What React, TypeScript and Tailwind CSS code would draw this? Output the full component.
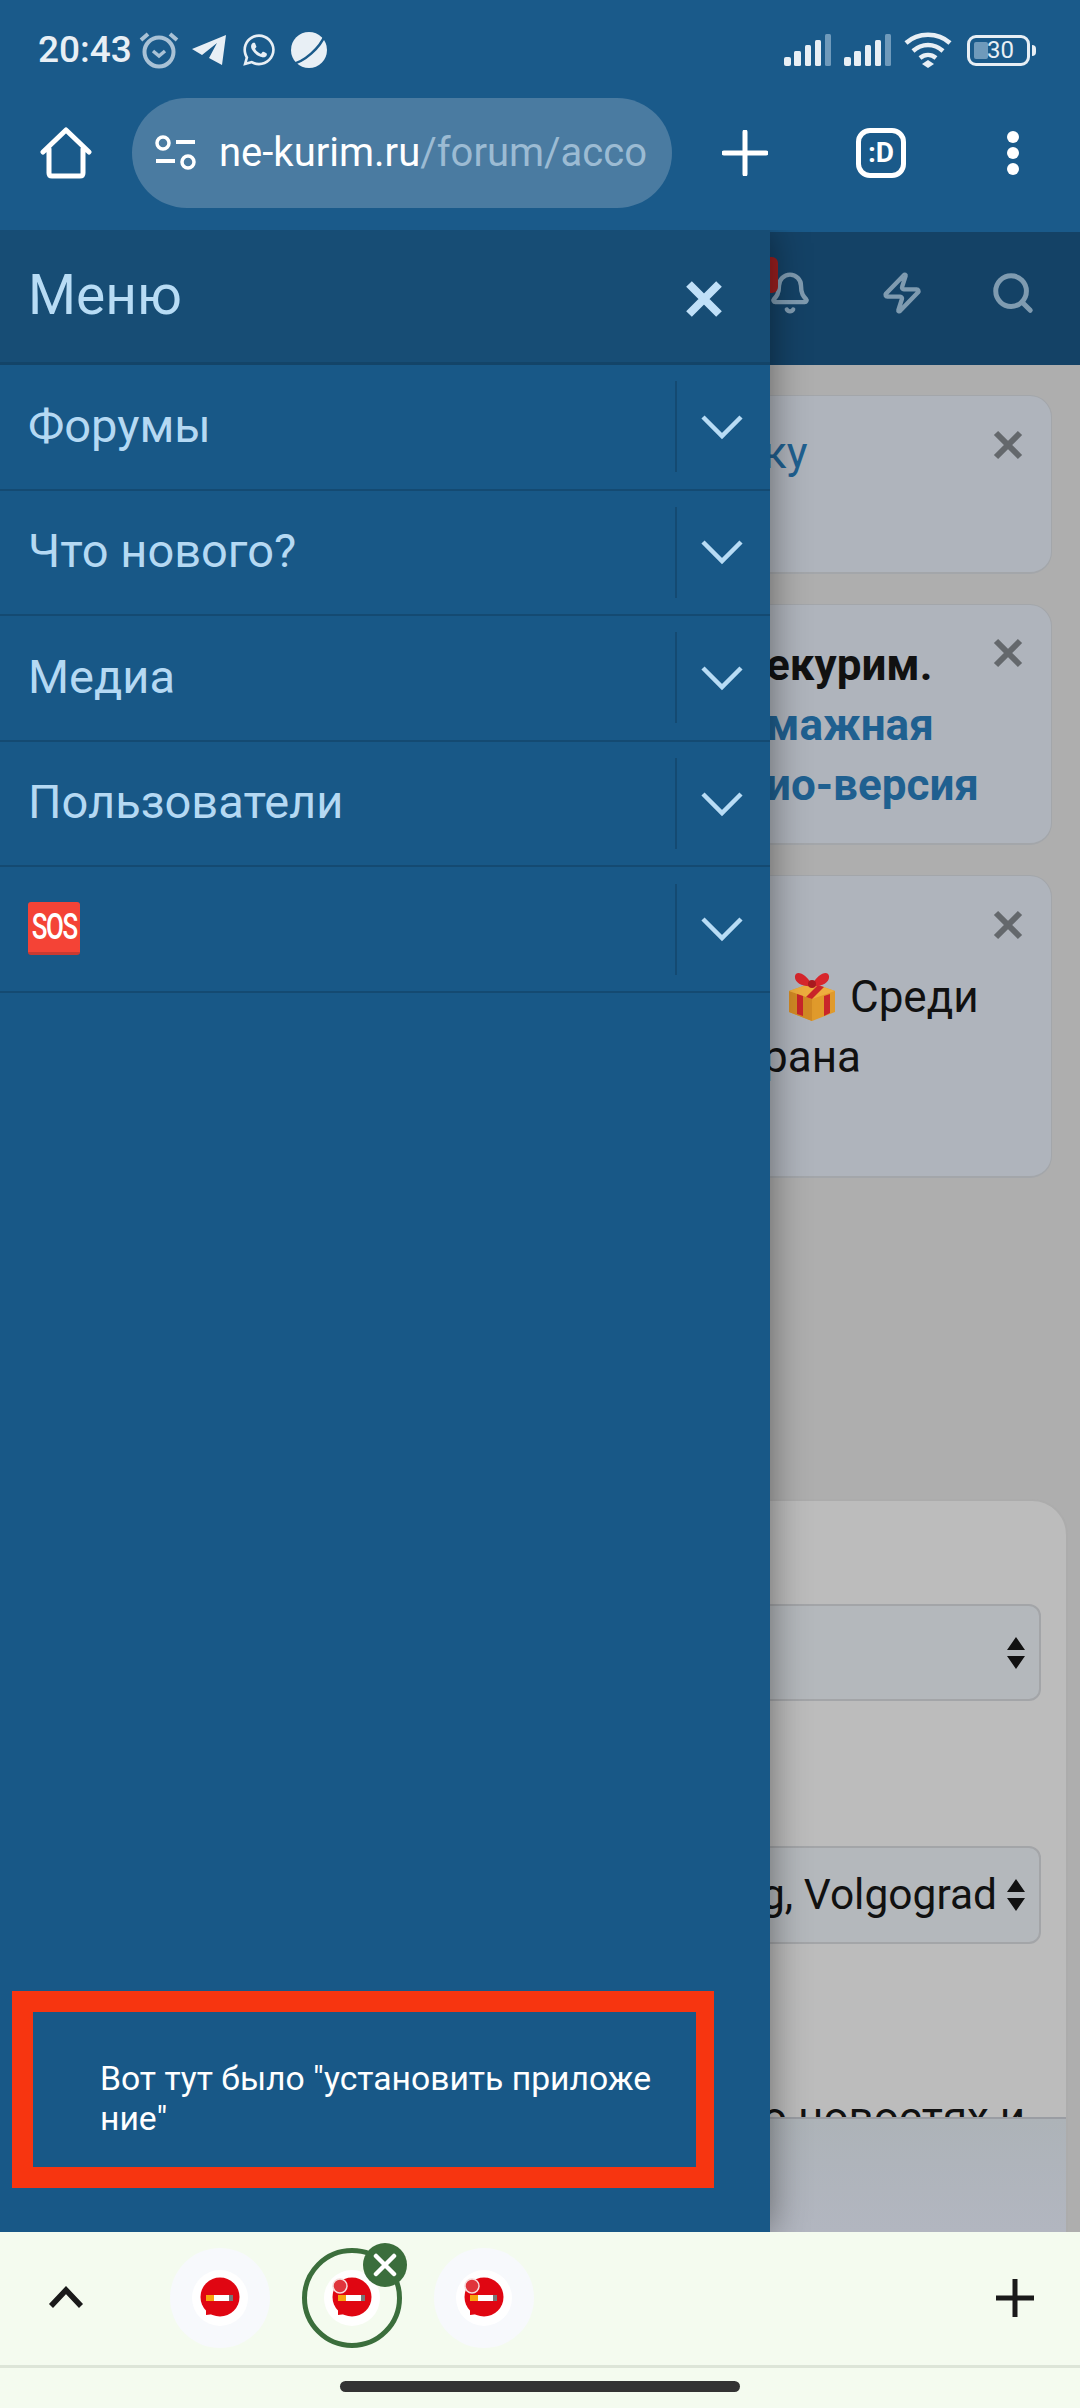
import { Bell, Search, Zap } from "lucide-react";
import { FaWhatsapp } from "react-icons/fa";

const MENU_ITEMS = ["Форумы", "Что нового?", "Медиа", "Пользователи", "SOS"];

function SignalBars() {
  return (
    <svg width="48" height="32" viewBox="0 0 48 32">
      <rect x="0" y="23" width="7" height="9" rx="2" fill="#e8eff5" />
      <rect x="10" y="17" width="7" height="15" rx="1.5" fill="#e8eff5" />
      <rect x="21" y="11" width="6" height="21" rx="1.5" fill="#e8eff5" />
      <rect x="31" y="6" width="6" height="26" rx="1.5" fill="#e8eff5" />
      <rect x="41" y="0" width="6" height="32" rx="1.5" fill="#6f9abb" />
    </svg>
  );
}

function GiftEmoji() {
  return (
    <svg width="48" height="50" viewBox="0 0 48 50" className="shrink-0">
      <path d="M1 19 24 11 47 19V40L24 49 1 40Z" fill="#e09a2b" />
      <path d="M1 19 24 27V49L1 40Z" fill="#d28a24" />
      <path d="M1 19 24 27 47 19 24 11Z" fill="#eeae3e" />
      <path d="M9 22 15 24V44L9 42ZM36 24 42 22V41L36 44Z" fill="#c9252a" />
      <path d="M30 13 36 15 24 27 18 25Z" fill="#c9252a" />
      <path d="M24 13C18 1 8-2 7 4 6 11 15 15 24 14 33 15 42 11 41 4 40-2 30 1 24 13Z" fill="#d8262c" />
      <circle cx="24" cy="12" r="4" fill="#a91b20" />
    </svg>
  );
}

function UpDownArrows() {
  return (
    <svg width="20" height="32" viewBox="0 0 20 32" className="shrink-0">
      <path d="M10 0 19 13H1ZM1 19H19L10 32Z" fill="#111" />
    </svg>
  );
}

function CloseGlyph() {
  return (
    <svg width="30" height="30" viewBox="0 0 30 30" className="shrink-0">
      <path d="M3 3 27 27M27 3 3 27" stroke="#64686c" strokeWidth="6" />
    </svg>
  );
}

function SiteBubble({ dot }: { dot?: boolean }) {
  return (
    <svg width="56" height="56" viewBox="0 0 56 56">
      <circle cx="28" cy="28" r="28" fill="#fff" />
      <circle cx="28" cy="27" r="19.5" fill="#e00612" />
      <path d="M14 38 14 45 22 44Z" fill="#e00612" />
      <rect x="14" y="25" width="8" height="6" fill="#f7a30f" />
      <rect x="22" y="25" width="15" height="6" fill="#fff" />
      <rect x="37" y="25" width="4" height="6" fill="#777" />
      {dot ? <circle cx="16" cy="16" r="7" fill="#e0353c" stroke="#f6dcdc" strokeWidth="1.5" /> : null}
    </svg>
  );
}

function StatusBar() {
  return (
    <div className="flex h-[98px] items-start justify-between pt-[31px] pl-[38px] pr-[44px] text-[#e8eff5]">
      <div className="flex items-center">
        <span className="text-[37px] leading-[38px] font-medium">20:43</span>
        <svg width="40" height="38" viewBox="0 0 40 38" className="ml-[7px]">
          <circle cx="20" cy="21" r="14.5" fill="none" stroke="#a9c2d6" strokeWidth="4" />
          <path d="M14 20 20 25 26 20" fill="none" stroke="#a9c2d6" strokeWidth="3.5" />
          <path d="M2 9 9 3M38 9 31 3" stroke="#a9c2d6" strokeWidth="4" />
        </svg>
        <svg width="36" height="32" viewBox="0 0 36 32" className="ml-[12px]">
          <path d="M1 15 35 1 31 31 18 24 26 9 11 21Z" fill="#e8eff5" />
        </svg>
        <FaWhatsapp size={36} className="ml-[14px]" />
        <svg width="38" height="38" viewBox="0 0 38 38" className="ml-[13px]">
          <circle cx="19" cy="19" r="18" fill="#e8eff5" />
          <path d="M2 33C14 31 30 17 35 4" fill="none" stroke="#1a5a8a" strokeWidth="2.5" />
        </svg>
      </div>
      <div className="flex items-center">
        <SignalBars />
        <div className="ml-[12px]">
          <SignalBars />
        </div>
        <svg width="48" height="38" viewBox="0 0 48 38" className="ml-[12px]">
          <path d="M2 12C14 1 34 1 46 12" fill="none" stroke="#e8eff5" strokeWidth="4.5" />
          <path d="M9 20C18 12 30 12 39 20" fill="none" stroke="#e8eff5" strokeWidth="4.5" />
          <path d="M16 27C21 23 27 23 32 27" fill="none" stroke="#e8eff5" strokeWidth="4.5" />
          <path d="M24 29 30 33 24 37 18 33Z" fill="#e8eff5" />
        </svg>
        <div className="ml-[15px] flex items-center">
          <div className="relative flex h-[31px] w-[63px] items-center rounded-[9px] border-[3px] border-[#e8eff5] pl-[17px] text-[24px] leading-none">
            <span className="absolute top-[4px] bottom-[4px] left-[4px] w-[14px] rounded-[2px] bg-[#6f9abb]" />
            <span className="relative">30</span>
          </div>
          <span className="ml-[2px] h-[11px] w-[4px] rounded-r-sm bg-[#e8eff5]" />
        </div>
      </div>
    </div>
  );
}

function AddressRow() {
  return (
    <div className="flex h-[110px] items-center">
      <svg width="52" height="52" viewBox="0 0 52 52" className="ml-[40px]">
        <path d="M3 25 26 3 49 25M9 22V46C9 48 10 49 12 49H40C42 49 43 48 43 46V22" fill="none" stroke="#fff" strokeWidth="5" strokeLinecap="round" strokeLinejoin="round" />
      </svg>
      <div className="ml-[40px] flex h-[110px] w-[540px] items-center overflow-hidden rounded-full bg-[#4a7ba1] pr-[22px] pl-[23px]">
        <svg width="42" height="36" viewBox="0 0 42 36" className="shrink-0">
          <circle cx="8" cy="8" r="6" fill="none" stroke="#fff" strokeWidth="3.5" />
          <path d="M21 7H40M1 26H20" stroke="#fff" strokeWidth="4" />
          <circle cx="33" cy="27" r="6" fill="none" stroke="#fff" strokeWidth="3.5" />
        </svg>
        <div className="ml-[22px] overflow-hidden text-[40px] whitespace-nowrap text-white">
          ne-kurim.ru<span className="text-[#9cbbd3]">/forum/acco</span>
        </div>
      </div>
      <svg width="46" height="46" viewBox="0 0 46 46" className="ml-[50px]">
        <path d="M23 2V44M2 23H44" stroke="#fff" strokeWidth="5" strokeLinecap="round" />
      </svg>
      <div className="ml-[88px] flex h-[50px] w-[50px] items-center justify-center rounded-[14px] border-[5px] border-white text-[28px] leading-none font-bold text-white">
        :D
      </div>
      <div className="ml-[101px] flex flex-col gap-[4px]">
        <span className="h-[12px] w-[12px] rounded-full bg-white" />
        <span className="h-[12px] w-[12px] rounded-full bg-white" />
        <span className="h-[12px] w-[12px] rounded-full bg-white" />
      </div>
    </div>
  );
}

function PageBehind() {
  return (
    <div className="h-full bg-[#aeaeae]">
      <div className="mt-[2px] flex h-[133px] items-center bg-[#144266] pb-[12px] text-[#7f9bb0]">
        <div className="relative ml-[768px]">
          <Bell size={44} strokeWidth={2.4} />
        </div>
        <Zap size={44} strokeWidth={2.4} className="ml-[68px]" />
        <Search size={46} strokeWidth={2.6} className="ml-[66px]" />
      </div>
      <div className="flex flex-col gap-[30px] pt-[30px] pr-[28px] text-[44px] leading-[60px]">
        <div className="flex h-[179px] items-start justify-between rounded-[22px] border border-b-2 border-[#a3a6aa] bg-[#afb4bc] pt-[27px] pr-[28px] pl-[762px]">
          <span className="text-[#1f6090]">ку</span>
          <div className="pt-[7px]">
            <CloseGlyph />
          </div>
        </div>
        <div className="flex h-[241px] items-start justify-between rounded-[22px] border border-b-2 border-[#a3a6aa] bg-[#afb4bc] pt-[30px] pr-[28px] pl-[765px]">
          <div className="font-bold text-[#111]">
            <div>екурим.</div>
            <div className="text-[#1f6090]">мажная</div>
            <div className="text-[#1f6090]">ио-версия</div>
          </div>
          <div className="mt-[3px]">
            <CloseGlyph />
          </div>
        </div>
        <div className="flex h-[303px] items-start justify-between rounded-[22px] border border-b-2 border-[#a3a6aa] bg-[#afb4bc] pt-[91px] pr-[28px] pl-[762px] text-[#111]">
          <div>
            <div className="flex h-[60px] items-center">
              <span className="ml-[25px]">
                <GiftEmoji />
              </span>
              <span className="ml-[14px]">Среди</span>
            </div>
            <div>рана</div>
          </div>
          <div className="-mt-[57px]">
            <CloseGlyph />
          </div>
        </div>
      </div>
      <div className="mt-[321px] mr-[12px] h-[900px] rounded-[36px] border-2 border-[#acacac] bg-[#bcbcbc] pt-[103px] pr-[25px] text-[#111]">
        <div className="flex h-[97px] items-center justify-end rounded-[12px] border-2 border-[#a3a5a8] bg-[#b4b8bc] pr-[13px]">
          <UpDownArrows />
        </div>
        <div className="mt-[145px] flex h-[98px] items-center justify-between rounded-[12px] border-2 border-[#a3a5a8] bg-[#b4b8bc] pr-[13px] pl-[757px] whitespace-nowrap">
          <span className="text-[42.5px]">g, Volgograd</span>
          <UpDownArrows />
        </div>
        <div className="mt-[144px] pl-[760px] text-[44px] leading-[60px] whitespace-nowrap">о новостях и</div>
      </div>
    </div>
  );
}

function DrawerMenu() {
  return (
    <aside className="absolute inset-y-0 left-0 flex w-[770px] flex-col bg-[#185887] shadow-[0_0_36px_rgba(0,0,0,0.45)]">
      <div className="flex h-[135px] shrink-0 items-center justify-between border-b-[3px] border-[#134468] bg-[#174d75] pr-[47px] pl-[28px] text-[#b8dcf5]">
        <span className="-mt-[2px] text-[55px]">Меню</span>
        <svg width="38" height="38" viewBox="0 0 38 38" className="mt-[6px]">
          <path d="M4 4 34 34M34 4 4 34" stroke="#c0e0f8" strokeWidth="8" />
        </svg>
      </div>
      {MENU_ITEMS.map((item) => (
        <div key={item} className="flex h-[125.6px] shrink-0 items-center border-b-2 border-[#144a72] text-[47px] text-[#b5d9f3]">
          <div className="flex-1 pb-[2px] pl-[28px]">
            {item === "SOS" ? (
              <span className="flex h-[53px] w-[52px] items-center justify-center rounded-[3px] border-b-[3px] border-[#c93a32] bg-[#f44336] text-[36px] leading-none font-medium tracking-[-2px] text-white">
                <span className="scale-x-[0.72]">SOS</span>
              </span>
            ) : (
              item
            )}
          </div>
          <div className="flex h-[91px] w-[95px] items-center justify-center border-l-2 border-[#144a72]">
            <svg width="42" height="26" viewBox="0 0 42 26" className="-ml-[3px]">
              <path d="M2 3 21 22 40 3" fill="none" stroke="#b8dcf5" strokeWidth="4.5" />
            </svg>
          </div>
        </div>
      ))}
      <div className="mt-auto mb-[44px] ml-[12px] flex h-[197px] w-[702px] flex-col justify-center border-[21px] border-r-[18px] border-[#f73510] pt-[18px] pl-[67px] text-[33.7px] leading-[40px] text-white">
        <span>Вот тут было "установить приложе</span>
        <span>ние"</span>
      </div>
    </aside>
  );
}

function TabStrip() {
  return (
    <div className="flex h-[176px] shrink-0 flex-col bg-[#f4fbef]">
      <div className="flex h-[133px] items-center pb-[2px]">
        <svg width="36" height="24" viewBox="0 0 36 24" className="ml-[48px]">
          <path d="M3 20 18 4 33 20" fill="none" stroke="#1a1a1a" strokeWidth="5.5" />
        </svg>
        <div className="ml-[86px] flex h-[100px] w-[100px] items-center justify-center rounded-full bg-[#f7f9fc]">
          <SiteBubble />
        </div>
        <div className="relative ml-[32px] flex h-[100px] w-[100px] items-center justify-center rounded-full border-[5px] border-[#3b6e3c]">
          <SiteBubble dot />
          <span className="absolute -top-[10px] -right-[10px] flex h-[44px] w-[44px] items-center justify-center rounded-full bg-[#3b6e3c]">
            <svg width="24" height="24" viewBox="0 0 24 24">
              <path d="M3 3 21 21M21 3 3 21" stroke="#fff" strokeWidth="4.5" strokeLinecap="round" />
            </svg>
          </span>
        </div>
        <div className="ml-[32px] flex h-[100px] w-[100px] items-center justify-center rounded-full bg-[#f7f9fc]">
          <SiteBubble dot />
        </div>
        <svg width="42" height="42" viewBox="0 0 42 42" className="ml-[460px]">
          <path d="M21 2V40M2 21H40" stroke="#1a1a1a" strokeWidth="5" />
        </svg>
      </div>
      <div className="h-[3px] bg-[#dde5d8]" />
      <div className="flex flex-1 items-start justify-center pt-[13px]">
        <div className="h-[11px] w-[400px] rounded-full bg-[#333]" />
      </div>
    </div>
  );
}

export default function App() {
  return (
    <div className="flex h-[2408px] w-[1080px] flex-col overflow-hidden [font-family:Roboto,sans-serif]">
      <header className="h-[230px] shrink-0 bg-[#1a5a8a]">
        <StatusBar />
        <AddressRow />
      </header>
      <main className="relative min-h-0 flex-1 overflow-hidden bg-[#1a5a8a]">
        <PageBehind />
        {/* обрезанный сверху липкий блок страницы и красная метка колокольчика */}
        <div className="absolute right-[14px] bottom-0 left-0 h-[115px] border-t-2 border-[#9a9da3] bg-gradient-to-b from-[#adb3b8] to-[#b2b6c0]" />
        <span className="absolute top-[27px] left-[764px] h-[36px] w-[14px] rounded-[6px] bg-[#9b1f1f]" />
        <DrawerMenu />
      </main>
      <TabStrip />
    </div>
  );
}
